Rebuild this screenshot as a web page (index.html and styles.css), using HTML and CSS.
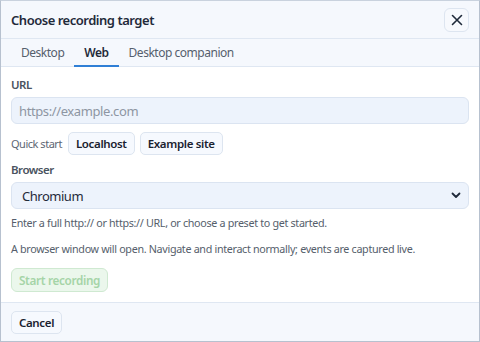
FILE: index.html
```html
<!DOCTYPE html>
<html lang="en">
<head>
    <meta charset="UTF-8">
    <meta name="viewport" content="width=device-width, initial-scale=1.0">
    <title>Choose recording target</title>
    <link rel="stylesheet" href="styles.css">
</head>
<body>
    <div class="dialog">
        <div class="dialog-header">
            <h1 class="dialog-title">Choose recording target</h1>
            <button class="close-btn" aria-label="Close">
                <svg width="12" height="12" viewBox="0 0 12 12">
                    <path d="M1.5 1.5 L10.5 10.5 M10.5 1.5 L1.5 10.5" stroke="#1f2a3a" stroke-width="1.6" stroke-linecap="round"/>
                </svg>
            </button>
        </div>
        <div class="tabs">
            <span class="tab">Desktop</span>
            <span class="tab active">Web</span>
            <span class="tab">Desktop companion</span>
        </div>
        <div class="dialog-body">
            <label class="field-label">URL</label>
            <input class="text-input" type="text" placeholder="https://example.com">
            <div class="quick-start">
                <span class="quick-label">Quick start</span>
                <button class="chip">Localhost</button>
                <button class="chip">Example site</button>
            </div>
            <label class="field-label">Browser</label>
            <div class="select-wrap">
                <span class="select-value">Chromium</span>
                <svg width="10" height="7" viewBox="0 0 10 7">
                    <path d="M1.5 1.5 L5 5 L8.5 1.5" fill="none" stroke="#1f2a3a" stroke-width="1.8" stroke-linecap="round" stroke-linejoin="round"/>
                </svg>
            </div>
            <p class="hint">Enter a full http:// or https:// URL, or choose a preset to get started.</p>
            <p class="hint">A browser window will open. Navigate and interact normally; events are captured live.</p>
            <div>
                <button class="start-btn" disabled>Start recording</button>
            </div>
        </div>
        <div class="dialog-footer">
            <button class="cancel-btn">Cancel</button>
        </div>
    </div>
</body>
</html>
```

FILE: styles.css
```css
body {
    margin: 0;
    font-family: "Noto Sans", "Open Sans", sans-serif;
    letter-spacing: -0.03em;
    color: #1f2a3a;
    background: #ffffff;
}

.dialog {
    display: flex;
    flex-direction: column;
    height: 342px;
    box-sizing: border-box;
    border: 1px solid #b7c1cf;
    border-top-color: #c9d2de;
    background: #ffffff;
}

.dialog-header {
    display: flex;
    align-items: center;
    justify-content: space-between;
    height: 37px;
    padding: 0 10px;
    background: #f5f8fd;
    border-bottom: 1px solid #dfe7f2;
}

.dialog-title {
    margin: 0;
    font-size: 13px;
    font-weight: 600;
}

.close-btn {
    display: flex;
    align-items: center;
    justify-content: center;
    width: 25px;
    height: 24px;
    padding: 0;
    background: #f7f9fd;
    border: 1px solid #dde5f0;
    border-radius: 6px;
}

.tabs {
    display: flex;
    padding: 0 10px;
    height: 27px;
    background: #f5f8fd;
    border-bottom: 1px solid #dfe7f2;
}

.tab {
    display: flex;
    align-items: center;
    padding: 0 10px;
    font-size: 12px;
    color: #555f6d;
    border-bottom: 2px solid transparent;
    margin-bottom: -1px;
}

.tab.active {
    color: #1f2a3a;
    font-weight: 600;
    border-bottom-color: #2f7fd6;
}

.dialog-body {
    flex: 1;
    display: flex;
    flex-direction: column;
    padding: 10px 10px 0;
}

.field-label {
    font-size: 11.5px;
    line-height: 16px;
    font-weight: 600;
    color: #4a5360;
    margin-bottom: 4px;
}

.text-input {
    height: 27px;
    box-sizing: border-box;
    padding: 0 7px;
    font-family: inherit;
    font-size: 13px;
    letter-spacing: -0.03em;
    background: #edf3fc;
    border: 1px solid #dbe4f1;
    border-radius: 6px;
}

.text-input::placeholder {
    color: #8d96a3;
}

.quick-start {
    display: flex;
    align-items: center;
    gap: 5px;
    margin: 8px 0 7px;
}

.quick-label {
    font-size: 11px;
    color: #5d6673;
    margin-right: 1px;
}

.chip, .cancel-btn {
    height: 23px;
    padding: 0 7px;
    font-family: inherit;
    font-size: 11.5px;
    letter-spacing: -0.03em;
    font-weight: 600;
    color: #1a2230;
    background: #f6f9fe;
    border: 1px solid #dde5f0;
    border-radius: 5px;
}

.select-wrap {
    display: flex;
    align-items: center;
    justify-content: space-between;
    height: 27px;
    box-sizing: border-box;
    padding: 0 7px 0 10px;
    background: #edf3fc;
    border: 1px solid #dbe4f1;
    border-radius: 6px;
    font-size: 13px;
}

.hint {
    margin: 6px 0 0;
    font-size: 10.75px;
    letter-spacing: -0.03em;
    color: #555e6b;
    line-height: 16px;
}

.hint + .hint {
    margin-top: 10px;
}

.start-btn {
    margin-top: 11px;
    height: 24px;
    padding: 0 7px;
    font-family: inherit;
    font-size: 11.75px;
    letter-spacing: -0.03em;
    font-weight: 600;
    color: #a5d4a7;
    background: #ebf7ec;
    border: 1px solid #cfe9d1;
    border-radius: 6px;
}

.dialog-footer {
    display: flex;
    align-items: center;
    height: 38px;
    padding: 0 10px;
    background: #f5f8fd;
    border-top: 1px solid #dfe7f2;
}
```
